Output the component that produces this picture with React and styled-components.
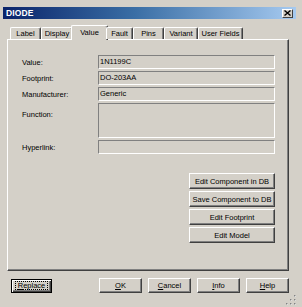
import React from 'react';
import styled, { createGlobalStyle } from 'styled-components';

const Global = createGlobalStyle`
  html, body { margin: 0; padding: 0; background: #d4d0c8; }
  body { font-family: "Liberation Sans", Arial, sans-serif; color: #000; }
`;

const Window = styled.div`
  position: relative;
  width: 302px;
  height: 307px;
  box-sizing: border-box;
  padding: 7px 6px 0 3px;
  background: #d4d0c8;
  display: flex;
  flex-direction: column;
`;

const TitleBar = styled.div`
  height: 12px;
  display: flex;
  align-items: center;
  justify-content: space-between;
  padding: 0 3px 0 3px;
  background: linear-gradient(to right, #0a246a 0%, #3a6ea5 45%, #a6caf0 100%);
`;

const Title = styled.span`
  color: #fff;
  font-weight: bold;
  font-size: 8.5px;
  letter-spacing: 0.1px;
`;

const CloseBox = styled.div`
  width: 11px;
  height: 9px;
  box-sizing: border-box;
  background: #d4d0c8;
  border: 1px solid;
  border-color: #fff #404040 #404040 #fff;
  display: flex;
  align-items: center;
  justify-content: center;
`;

const TabRow = styled.div`
  position: relative;
  z-index: 1;
  display: flex;
  align-items: flex-end;
  height: 14px;
  margin: 6px 0 0 7px;
`;

const Tab = styled.div`
  box-sizing: border-box;
  width: ${p => (p.$active ? p.$w + 4 : p.$w)}px;
  height: ${p => (p.$active ? 15 : 12)}px;
  margin: 0 ${p => (p.$active ? -2 : 0)}px ${p => (p.$active ? -1 : 0)}px;
  background: #d4d0c8;
  border-top: 1px solid #fff;
  border-left: 1px solid #fff;
  border-right: 1px solid #404040;
  box-shadow: inset -1px 0 0 #808080;
  border-radius: 2px 2px 0 0;
  font-size: 7.5px;
  display: flex;
  align-items: center;
  justify-content: center;
  padding-bottom: ${p => (p.$active ? 2 : 0)}px;
`;

const Panel = styled.div`
  margin-left: 4px;
  width: 282px;
  height: 232px;
  box-sizing: border-box;
  border: 1px solid;
  border-color: #fff #404040 #404040 #fff;
  box-shadow: inset -1px -1px 0 #808080;
  padding: 15px 13px 0 14px;
  display: flex;
  flex-direction: column;
`;

const Form = styled.div`
  display: grid;
  grid-template-columns: 76px 177px;
  row-gap: 2px;
`;

const Label = styled.div`
  font-size: 7.5px;
  align-self: ${p => (p.$top ? 'start' : 'center')};
  padding-top: ${p => (p.$top ? 7 : 0)}px;
`;

const Field = styled.div`
  height: ${p => p.$h || 14}px;
  box-sizing: border-box;
  border: 1px solid;
  border-color: #808080 #fff #fff #808080;
  background: #d4d0c8;
  font-size: 7.5px;
  line-height: 11px;
  padding-left: 1px;
`;

const ButtonColumn = styled.div`
  margin-top: 19px;
  display: flex;
  flex-direction: column;
  align-items: flex-end;
  gap: 2px;
`;

const Button = styled.button`
  width: ${p => p.$w}px;
  height: ${p => p.$h}px;
  box-sizing: border-box;
  padding: 0;
  margin: 0;
  background: #d4d0c8;
  border: 1px solid;
  border-color: #fff #404040 #404040 #fff;
  box-shadow: inset -1px -1px 0 #808080;
  font-family: inherit;
  font-size: 7.5px;
  color: #000;
  display: flex;
  align-items: center;
  justify-content: center;
  white-space: nowrap;
`;

const DefaultButton = styled(Button)`
  border: 1px solid #000;
  box-shadow: inset 1px 1px 0 #fff, inset -1px -1px 0 #404040, inset -2px -2px 0 #808080;
`;

const Focus = styled.span`
  display: flex;
  align-items: center;
  justify-content: center;
  box-sizing: border-box;
  width: 33px;
  height: 9px;
  border: 1px dotted #000;
  font-size: 7.5px;
  line-height: 7px;
`;

const U = styled.span`
  text-decoration: underline;
`;

const BottomRow = styled.div`
  display: flex;
  align-items: center;
  margin: 7px 7px 0 8px;
  gap: 6px;
`;

const Spacer = styled.div`
  flex: 1;
`;

const Grip = styled.svg`
  position: absolute;
  right: 6px;
  bottom: 2px;
`;

const tabs = [
  ['Label', 31],
  ['Display', 32],
  ['Value', 33],
  ['Fault', 27],
  ['Pins', 31],
  ['Variant', 34],
  ['User Fields', 45],
];

const fields = [
  ['Value:', '1N1199C'],
  ['Footprint:', 'DO-203AA'],
  ['Manufacturer:', 'Generic'],
  ['Function:', '', 35, true],
  ['Hyperlink:', ''],
];

const actions = ['Edit Component in DB', 'Save Component to DB', 'Edit Footprint', 'Edit Model'];

export default function App() {
  return (
    <>
      <Global />
      <Window>
        <TitleBar>
          <Title>DIODE</Title>
          <CloseBox>
            <svg width="7" height="6" viewBox="0 0 7 6">
              <path d="M0.5 0.5 L6.5 5.5 M6.5 0.5 L0.5 5.5" stroke="#000" strokeWidth="1.4" />
            </svg>
          </CloseBox>
        </TitleBar>
        <TabRow>
          {tabs.map(([t, w]) => (
            <Tab key={t} $w={w} $active={t === 'Value'}>{t}</Tab>
          ))}
        </TabRow>
        <Panel>
          <Form>
            {fields.map(([l, v, h, top]) => (
              <React.Fragment key={l}>
                <Label $top={top}>{l}</Label>
                <Field $h={h}>{v}</Field>
              </React.Fragment>
            ))}
          </Form>
          <ButtonColumn>
            {actions.map(a => (
              <Button key={a} $w={86} $h={16}>{a}</Button>
            ))}
          </ButtonColumn>
        </Panel>
        <BottomRow>
          <DefaultButton $w={41} $h={14}>
            <Focus><U>R</U>eplace</Focus>
          </DefaultButton>
          <Spacer />
          <Button $w={43} $h={15}><U>O</U>K</Button>
          <Button $w={43} $h={15}><U>C</U>ancel</Button>
          <Button $w={43} $h={15}><U>I</U>nfo</Button>
          <Button $w={43} $h={15}><U>H</U>elp</Button>
        </BottomRow>
        <Grip width="10" height="10" viewBox="0 0 10 10">
          {[[8, 0], [8, 4], [4, 4], [8, 8], [4, 8], [0, 8]].map(([x, y]) => (
            <g key={`${x}-${y}`}>
              <rect x={x + 0.5} y={y + 0.5} width="1.5" height="1.5" fill="#fff" />
              <rect x={x} y={y} width="1.5" height="1.5" fill="#808080" />
            </g>
          ))}
        </Grip>
      </Window>
    </>
  );
}
